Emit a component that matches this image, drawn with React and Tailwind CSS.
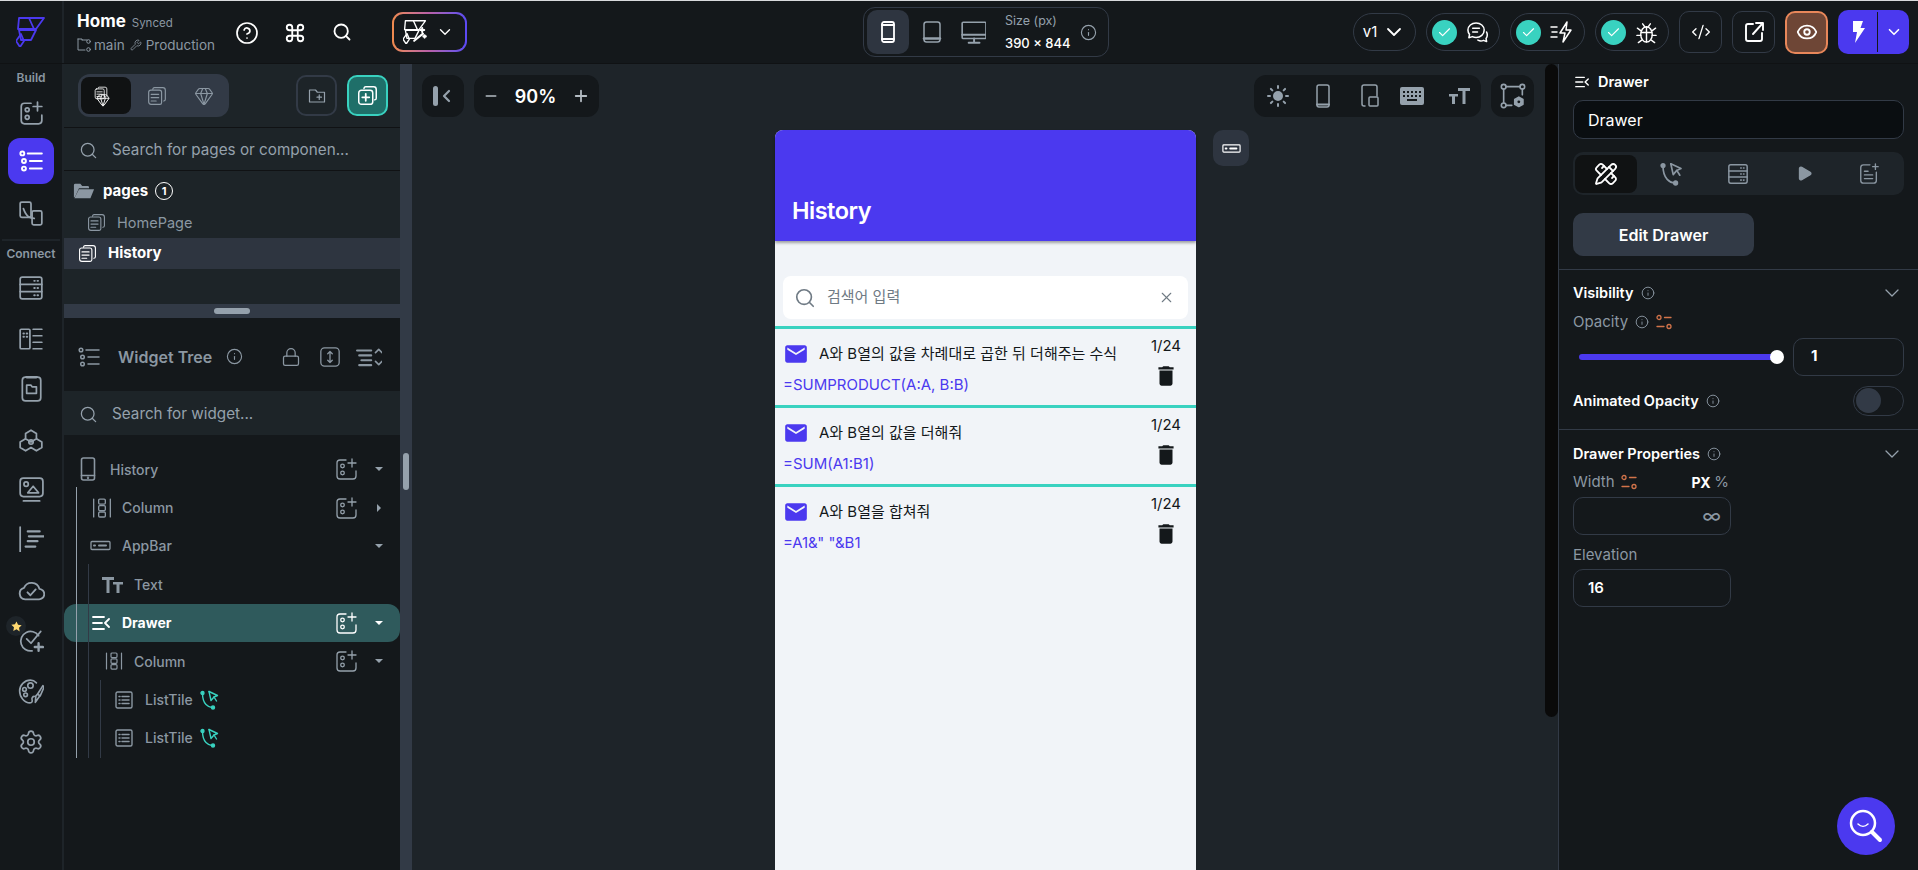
import {
  ChevronDown, CircleHelp, Command, Search, Info, Wrench, Gem, Minus, Plus, Sun, Check, CodeXml, Eye, X, Settings, Lock, Play, PencilRuler,
} from 'lucide-react';
import { MdEmail, MdDelete } from 'react-icons/md';

const Ic = ({ size = 24, vb = 24, className = '', sw = 1.6, children }) => (
  <svg width={size} height={size} viewBox={`0 0 ${vb} ${vb}`} fill="none" stroke="currentColor" strokeWidth={sw} strokeLinecap="round" strokeLinejoin="round" className={`shrink-0 ${className}`}>
    {children}
  </svg>
);

const FFLogo = ({ size = 30, className = '', sw = 1.8, wand }) => (
  <Ic size={size} vb={30} sw={sw} className={className}>
    <path d="M3 1h25l-8 11H2z" />
    <path d="M13 1l5 11" />
    <path d="M3 13h17l-5 10H5z" />
    <path d="M5 17l3 7-4 6-4-6z" />
    {wand && <path d="M14 26l11-9M24 10v5M21.500 12.500h5M27 19v3M25.500 20.500h3" strokeWidth="2.600" />}
  </Ic>
);

const AddWidget = ({ size = 24, className = '', sw = 1.6 }) => (
  <Ic size={size} className={className} sw={sw}>
    <path d="M12 3H6a3 3 0 0 0-3 3v13a3 3 0 0 0 3 3h13a3 3 0 0 0 3-3v-5" />
    <circle cx="8.500" cy="9" r="1.800" />
    <circle cx="8.500" cy="16" r="1.800" />
    <path d="M18 2v8M14 6h8" />
  </Ic>
);

const TreeListIcon = ({ size = 24, className = '', sw = 1.8 }) => (
  <Ic size={size} className={className} sw={sw}>
    <circle cx="4" cy="5" r="1.800" />
    <circle cx="5.500" cy="12" r="1.800" />
    <circle cx="5.500" cy="19" r="1.800" />
    <path d="M9 5h13M11 12h11M11 19h11" />
  </Ic>
);

const ConvertIcon = ({ size = 24, className = '' }) => (
  <Ic size={size} className={className}>
    <rect x="2" y="2" width="10" height="14" rx="1.500" />
    <path d="M5 8c3 8 6 9 10 9" />
    <rect x="13" y="10" width="9" height="13" rx="1.500" />
  </Ic>
);

const ServerIcon = ({ size = 24, className = '' }) => (
  <Ic size={size} className={className}>
    <rect x="2" y="2" width="20" height="20" rx="2" />
    <path d="M2 8.700h20M2 15.300h20" />
    <path d="M15 5.400h.5M18 5.400h.5M15 12h.5M18 12h.5M15 18.600h.5M18 18.600h.5" strokeWidth="1.800" />
  </Ic>
);

const ListSchema = ({ size = 24, className = '' }) => (
  <Ic size={size} className={className}>
    <rect x="2" y="3" width="9" height="18" rx="1" />
    <path d="M5 7h.5M8 7h.5M5 10h.5M8 10h.5" strokeWidth="1.800" />
    <path d="M14 3h8M14 9h8M14 15h8M14 21h8" />
  </Ic>
);

const PhoneFolder = ({ size = 24, className = '' }) => (
  <Ic size={size} className={className}>
    <rect x="4" y="1" width="17" height="22" rx="3" />
    <path d="M8 1h9" strokeWidth="2.400" />
    <path d="M8 8.500h4l1 1.500h4v6H8z" />
  </Ic>
);

const TriCircles = ({ size = 24, className = '' }) => (
  <Ic size={size} className={className}>
    <path d="M12 2l5 3v5l-5 3-5-3V5z" />
    <path d="M7 10l-5 3v5l5 3 5-3 5 3 5-3v-5l-5-3" />
    <circle cx="12" cy="13" r="2" />
  </Ic>
);

const MediaIcon = ({ size = 24, className = '' }) => (
  <Ic size={size} className={className}>
    <rect x="2" y="2" width="21" height="17" rx="3" />
    <circle cx="7.500" cy="7.500" r="2" />
    <path d="M9 15.500l5-6 5 6z" />
    <path d="M5 23h15" />
  </Ic>
);

const AlignIcon = ({ size = 24, className = '' }) => (
  <Ic size={size} className={className}>
    <path d="M2 1v23" />
    <path d="M9 5h11M10 9.500h14M9 14h9M7 19h9" strokeWidth="2" />
  </Ic>
);

const CloudCheck = ({ size = 26, className = '' }) => (
  <Ic size={size} className={className}>
    <path d="M7 20a5 5 0 0 1-1-9.800 7 7 0 0 1 13.200.8A4.500 4.500 0 0 1 18.500 20z" />
    <path d="M9 14l2.500 2.500L16 11.500" />
  </Ic>
);

const CheckPlus = ({ size = 26, className = '' }) => (
  <Ic size={size} className={className}>
    <path d="M19 8a9 9 0 1 0-6 14" />
    <path d="M8 11l4 4 9-11" />
    <path d="M19 15v7M15.500 18.500H23" strokeWidth="2.200" />
  </Ic>
);

const PaletteBrush = ({ size = 26, className = '' }) => (
  <Ic size={size} className={className} sw={1.500}>
    <path d="M17 4.500C15.500 3 13.500 2 11.500 2 6 2 1.500 6.500 1.500 12S6 23 11 23c2 0 2.500-1.500 2-3-.5-1.500.5-3 2-3" />
    <circle cx="11.500" cy="7" r="2.500" />
    <circle cx="6" cy="10.500" r="1.700" />
    <circle cx="7" cy="15.500" r="1.700" />
    <path d="M23 7l-5 8 2.500 1.500L24 8.500z" />
    <path d="M18 15l-1.500 1.500-.5 6 4.500-6.500" />
  </Ic>
);

const StackPages = ({ size = 20, className = '', sw = 1.400 }) => (
  <Ic size={size} className={className} sw={sw}>
    <path d="M7 4V3.500A2 2 0 0 1 9 2h10a3 3 0 0 1 3 3v11a2 2 0 0 1-2 2" />
    <path d="M4.500 5H15a2.500 2.500 0 0 1 2.500 2.500V20a2 2 0 0 1-2 2H5a3 3 0 0 1-3-3V7.500A2.500 2.500 0 0 1 4.500 5z" />
    <path d="M5 10h9M5 14h9M5 18h6" />
  </Ic>
);

const AddPage = ({ size = 22, className = '' }) => (
  <Ic size={size} className={className} sw={1.700}>
    <path d="M8 4V3.500A2 2 0 0 1 10 2h9a3 3 0 0 1 3 3v10a2 2 0 0 1-2 2" />
    <rect x="2" y="6" width="16" height="16" rx="3" />
    <path d="M10 10v8M6 14h8" strokeWidth="2" />
  </Ic>
);

const FolderAdd = ({ size = 20, className = '' }) => (
  <Ic size={size} className={className}>
    <path d="M2 4h8l2.500 3H22v13H2z" />
    <path d="M15 10.500v6M12 13.500h6" />
  </Ic>
);

const OpenFolder = ({ size = 24, className = '' }) => (
  <svg width={size} height={size} viewBox="0 0 24 24" fill="currentColor" className={`shrink-0 ${className}`}>
    <path d="M1 5.500A1.500 1.500 0 0 1 2.500 4H8l2 2.500h6A1.500 1.500 0 0 1 17.500 8v1H6.500L2.500 18 1 19z" />
    <path d="M6.500 10H23l-4 10H1.500z" />
  </svg>
);

const BranchIcon = ({ size = 14, className = '' }) => (
  <Ic size={size} vb={14} sw={1} className={className}>
    <path d="M1 1h4v1h5M1 1v11h7M5 2v0" />
    <circle cx="11.500" cy="3.500" r="1.800" />
    <circle cx="11.500" cy="11.500" r="1.800" />
  </Ic>
);

const VarIcon = ({ className = '' }) => (
  <Ic size={16} vb={16} sw={1.300} className={`text-[#d2734a] ${className}`}>
    <circle cx="3" cy="3.500" r="2" />
    <path d="M8.500 3.500H15" />
    <path d="M1 12.500h7" />
    <circle cx="13" cy="12.500" r="2" />
  </Ic>
);

const DrawerIcon = ({ size = 18, className = '' }) => (
  <Ic size={size} vb={18} sw={1.800} className={className}>
    <path d="M1 3h11M1 9h9M1 15h11M17 5l-4 4 4 4" />
  </Ic>
);

const ColumnIcon = ({ size = 18, className = '' }) => (
  <Ic size={size} vb={18} sw={1.200} className={className}>
    <path d="M1.500 1v16M16.500 1v16" />
    <rect x="6" y="1" width="6" height="4.500" rx="1" />
    <rect x="6" y="6.800" width="6" height="4.500" rx="1" />
    <rect x="6" y="12.600" width="6" height="4.500" rx="1" />
  </Ic>
);

const AppBarIcon = ({ size = 21, className = '' }) => (
  <Ic size={size} vb={21} sw={1.300} className={className}>
    <rect x="1" y="6.500" width="19" height="8" rx="1" />
    <path d="M4 10.500h1M9 10.500h7" strokeWidth="2" />
  </Ic>
);

const ListTileIcon = ({ size = 18, className = '' }) => (
  <Ic size={size} vb={18} sw={1.400} className={className}>
    <rect x="1" y="1" width="16" height="16" rx="1.500" />
    <path d="M4 5.500h1M7 5.500h7M4 9h1M7 9h7M4 12.500h1M7 12.500h7" strokeWidth="1.500" />
  </Ic>
);

const ActionFlow = ({ size = 20, className = '' }) => (
  <Ic size={size} vb={20} sw={1.400} className={className}>
    <circle cx="2.500" cy="3" r="1.500" fill="currentColor" />
    <path d="M2.500 3c0 5 1 9 3.500 11.500 2 2 4.500 3 6 3" />
    <circle cx="13" cy="17.500" r="1.500" fill="currentColor" />
    <path d="M9 1.500l8.500 4-3.500 1.500 2.500 4" />
    <path d="M9 1.500l2 9 3-3.500" />
  </Ic>
);

// big T left, small T right
const TextSize = ({ size = 21, className = '' }) => (
  <svg width={size} height={size} viewBox="0 0 21 21" fill="currentColor" className={`shrink-0 ${className}`}>
    <path d="M0 3h12v3H7.500v13h-3V6H0z" />
    <path d="M11 8h10v2.500h-3.500V19h-3v-8.500H11z" />
  </svg>
);

// small T left, big T right
const TextSizeUp = ({ size = 21, className = '' }) => (
  <svg width={size} height={size} viewBox="0 0 21 21" fill="currentColor" className={`shrink-0 ${className}`}>
    <path d="M9 2h12v3h-4.500v13h-3V5H9z" />
    <path d="M0 8h9v2.500H6V18H3v-7.500H0z" />
  </svg>
);

const Chats = ({ size = 24, className = '' }) => (
  <Ic size={size} sw={1.600} className={className}>
    <path d="M10.500 2C5.800 2 2 5.400 2 9.500c0 1.700.6 3.200 1.700 4.500L3 17.500l3.700-1.200c1.200.6 2.500.9 3.800.9 4.700 0 8.500-3.400 8.500-7.700S15.200 2 10.500 2z" />
    <path d="M7 7.500h7M7 11.500h5" />
    <path d="M21.500 11.500c.5.900.7 1.900.7 3 0 1.400-.5 2.700-1.300 3.700l.6 3.300-3.300-1.300c-1.700.8-4 .7-5.800-.2" />
  </Ic>
);

const Beetle = ({ size = 24, className = '' }) => (
  <Ic size={size} sw={1.500} className={className}>
    <ellipse cx="12" cy="14" rx="6" ry="8" />
    <path d="M12 6v16M6.500 12h11" />
    <path d="M8 3l2.500 3.500M16 3l-2.500 3.500" />
    <path d="M6 10L2.500 7.500M6 15H2M7 20l-3.500 2.500M18 10l3.500-2.500M18 15h4M17 20l3.500 2.500" />
  </Ic>
);

const Bolt = ({ size = 22, className = '' }) => (
  <svg width={size} height={size} viewBox="0 0 22 22" fill="currentColor" className={`shrink-0 ${className}`}>
    <path d="M6 0h10l-2.500 7H18L8 22l2-11H6z" />
  </svg>
);

const Info14 = ({ size = 14, className = 'text-[#8b97a2]' }) => <Info size={size} strokeWidth={1.600} className={`shrink-0 ${className}`} />;

const Caret = ({ right, className = 'text-[#95a1ac]' }) => (
  <svg width="8" height="8" viewBox="0 0 8 8" fill="currentColor" className={`shrink-0 ${className}`}>
    {right ? <path d="M2 0l4 4-4 4z" /> : <path d="M0 2h8L4 6z" />}
  </svg>
);

const railIcon = 'text-[#95a1ac]';

const Rail = () => (
  <aside className="flex w-[64px] shrink-0 flex-col items-center border-r-2 border-[#1e2429] pt-[6px]">
    <span className="text-[12px] leading-[16px] font-semibold text-[#8b97a2]">Build</span>
    <AddWidget size={26} className={`${railIcon} mt-[14px]`} />
    <div className="mt-[12px] flex h-[46px] w-[46px] items-center justify-center rounded-xl bg-[#4b39ef] text-white">
      <TreeListIcon size={26} />
    </div>
    <ConvertIcon size={26} className={`${railIcon} mt-[16px]`} />
    <div className="mt-[13px] h-[2px] w-[58px] bg-[#1e2429]" />
    <span className="mt-[5px] text-[12px] leading-[16px] font-semibold text-[#8b97a2]">Connect</span>
    <ServerIcon size={26} className={`${railIcon} mt-[13px]`} />
    <ListSchema size={26} className={`${railIcon} mt-[25px]`} />
    <PhoneFolder size={26} className={`${railIcon} mt-[24px]`} />
    <TriCircles size={26} className={`${railIcon} mt-[26px]`} />
    <MediaIcon size={26} className={`${railIcon} mt-[22px]`} />
    <AlignIcon size={26} className={`${railIcon} mt-[24px]`} />
    <CloudCheck size={28} className={`${railIcon} mt-[24px]`} />
    <div className="relative mt-[23px]">
      <CheckPlus size={26} className={railIcon} />
      <div className="absolute -top-[11px] -left-[12px] flex h-[20px] w-[20px] items-center justify-center rounded-full bg-[#1e2429]">
        <svg width="11" height="11" viewBox="0 0 24 24" fill="#ffd970"><path d="M12 1l3.400 7.300 7.900 1-5.800 5.500 1.500 7.900L12 18l-7 3.700 1.500-7.900L.7 8.300l7.900-1z" /></svg>
      </div>
    </div>
    <PaletteBrush size={26} className={`${railIcon} mt-[25px]`} />
    <Settings size={26} strokeWidth={1.600} className={`${railIcon} mt-[25px]`} />
  </aside>
);

const TreeRow = ({ pad, icon: Icon, iconSize, iconBox, label, add, caret, active, flow }) => (
  <div className={`flex h-[38.4px] items-center rounded-xl pr-[17px] ${pad} ${active ? 'bg-[#2f5a5c] text-white' : 'text-[#8b97a2]'}`}>
    <span className={`flex ${iconBox}`}><Icon size={iconSize} /></span>
    <span className={`text-[14px] ${active ? 'font-bold' : 'font-medium'}`}>{label}</span>
    {flow && <ActionFlow size={20} className="ml-[7px] text-[#39d2c0]" />}
    <div className="ml-auto flex items-center">
      {add && <AddWidget size={24} sw={1.300} className={active ? 'text-white' : 'text-[#95a1ac]'} />}
      {caret && <span className="ml-[17px] flex w-[8px]"><Caret right={caret === 'right'} className={active ? 'text-white' : 'text-[#95a1ac]'} /></span>}
    </div>
  </div>
);

const PhoneOutline = ({ size }) => (
  <Ic size={size} sw={1.600}>
    <rect x="5.500" y="1" width="13" height="22" rx="2" />
    <path d="M5.500 18.500h13" />
    <circle cx="12" cy="20.700" r=".4" fill="currentColor" />
  </Ic>
);

const LeftPanel = () => (
  <section className="flex w-[336px] shrink-0 flex-col">
    <div className="flex h-[64px] items-center justify-between border-b border-[#101214] bg-[#1d2428] pr-[12px] pl-[14px]">
      <div className="flex h-[43px] w-[151px] items-center rounded-xl bg-[#323a46] p-[3px]">
        <div className="flex h-[37px] w-[50px] items-center justify-center rounded-lg bg-[#101213] text-white">
          <Gem size={14} strokeWidth={1.600} className="translate-x-[4px] translate-y-[4px]" />
          <StackPages size={14} className="-translate-x-[12px] -translate-y-[3px]" />
        </div>
        <div className="flex flex-1 justify-center text-[#8b97a2]"><StackPages size={20} /></div>
        <div className="flex w-[44px] justify-center text-[#8b97a2]"><Gem size={20} strokeWidth={1.400} /></div>
      </div>
      <div className="flex items-center gap-[10px]">
        <div className="flex h-[41px] w-[41px] items-center justify-center rounded-[10px] border-2 border-[#323a46] text-[#95a1ac]"><FolderAdd size={18} /></div>
        <div className="flex h-[41px] w-[41px] items-center justify-center rounded-[10px] border-2 border-[#39d2c0] bg-[#1f6f69] text-white"><AddPage size={21} /></div>
      </div>
    </div>
    <div className="flex h-[43px] items-center gap-[14px] border-b border-[#101214] bg-[#1d2428] pt-[2px] pl-[15px]">
      <Search size={19} strokeWidth={1.600} className="text-[#95a1ac]" />
      <span className="text-[15.250px] text-[#95a1ac]">Search for pages or componen...</span>
    </div>
    <div className="flex h-[133px] flex-col bg-[#1d2428]">
      <div className="mt-[4px] flex h-[32px] items-center pl-[9px]">
        <OpenFolder size={22} className="text-[#8b97a2]" />
        <span className="ml-[8px] text-[15px] font-bold text-white">pages</span>
        <span className="ml-[7px] flex h-[18px] w-[18px] items-center justify-center rounded-full border border-white text-[11px] font-bold text-white">1</span>
      </div>
      <div className="flex h-[31px] items-center pl-[23px]">
        <StackPages size={19} className="text-[#8b97a2]" />
        <span className="ml-[11px] text-[14.500px] text-[#8b97a2]">HomePage</span>
      </div>
      <div className="flex h-[31px] items-center bg-[#2e3540] pl-[14px]">
        <StackPages size={19} className="text-white" />
        <span className="ml-[11px] text-[15px] font-bold text-white">History</span>
      </div>
    </div>
    <div className="flex h-[14px] shrink-0 items-center justify-center bg-[#323a46]">
      <div className="h-[6px] w-[36px] rounded-full bg-[#95a1ac]" />
    </div>
    <div className="flex h-[73px] items-center pt-[4px] pr-[18px] pl-[13px] text-[#8b97a2]">
      <TreeListIcon size={24} sw={1.500} />
      <span className="ml-[17px] text-[16px] font-semibold">Widget Tree</span>
      <Info size={17} strokeWidth={1.600} className="ml-[14px]" />
      <Lock size={20} strokeWidth={1.500} className="ml-auto" />
      <Ic size={22} sw={1.400} className="ml-[18px]">
        <rect x="2" y="2" width="20" height="20" rx="4" />
        <path d="M12 6v12M9.500 8.500L12 6l2.500 2.500M9.500 15.500L12 18l2.500-2.500" />
      </Ic>
      <Ic size={26} sw={1.500} className="ml-[15px]">
        <path d="M1 6h13M3 10.500h11M5 15h9M3 19.500h11" strokeWidth="2" />
        <path d="M18 8l3-3 3 3M18 16l3 3 3-3" />
      </Ic>
    </div>
    <div className="flex h-[44px] items-center gap-[14px] bg-[#1d2428] pt-[2px] pl-[15px]">
      <Search size={19} strokeWidth={1.600} className="text-[#95a1ac]" />
      <span className="text-[15.250px] text-[#95a1ac]">Search for widget...</span>
    </div>
    <div className="relative mt-[15px]">
      <TreeRow pad="pl-[12px]" icon={PhoneOutline} iconSize={24} iconBox="w-[34px]" label="History" add caret="down" />
      <TreeRow pad="pl-[28px]" icon={ColumnIcon} iconSize={20} iconBox="w-[30px]" label="Column" add caret="right" />
      <TreeRow pad="pl-[26px]" icon={AppBarIcon} iconSize={21} iconBox="w-[32px]" label="AppBar" caret="down" />
      <TreeRow pad="pl-[38px]" icon={TextSize} iconSize={21} iconBox="w-[32px]" label="Text" />
      <TreeRow pad="pl-[28px]" icon={DrawerIcon} iconSize={18} iconBox="w-[30px]" label="Drawer" add caret="down" active />
      <TreeRow pad="pl-[41px]" icon={ColumnIcon} iconSize={18} iconBox="w-[29px]" label="Column" add caret="down" />
      <TreeRow pad="pl-[51px]" icon={ListTileIcon} iconSize={18} iconBox="w-[30px]" label="ListTile" flow />
      <TreeRow pad="pl-[51px]" icon={ListTileIcon} iconSize={18} iconBox="w-[30px]" label="ListTile" flow />
      {/* guide lines */}
      <div className="absolute top-[37px] left-[12px] h-[271px] w-px bg-[#95a1ac]" />
      <div className="absolute top-[114px] left-[24px] h-[194px] w-px bg-[#323a46]" />
      <div className="absolute top-[230px] left-[36px] h-[78px] w-px bg-[#323a46]" />
    </div>
  </section>
);

const ToolBtn = ({ className = '', children }) => (
  <div className={`flex h-[42px] items-center rounded-xl bg-[#14181b] text-[#95a1ac] ${className}`}>{children}</div>
);

const HistoryRow = ({ title, formula }) => (
  <div className="flex h-[79px] border-t-[3px] border-[#39d2c0]">
    <div className="min-w-0 flex-1 pl-[8px]">
      <div className="mt-[11px] flex h-[28px] items-center">
        <MdEmail size={26} className="shrink-0 text-[#4b39ef]" />
        <span className="ml-[10px] text-[15px] text-[#14181b]">{title}</span>
      </div>
      <div className="mt-[7px] text-[15px] leading-[20px] text-[#4b39ef]">{formula}</div>
    </div>
    <div className="flex w-[60px] flex-col items-center pt-[6px]">
      <span className="text-[15px] leading-[22px] text-[#14181b]">1/24</span>
      <MdDelete size={26} className="mt-[6px] text-[#14181b]" />
    </div>
  </div>
);

const Phone = () => (
  <div className="h-[800px] w-[421px] shrink-0 rounded-t-lg bg-[#f1f4f8]">
    <div className="flex h-[111px] items-end rounded-t-lg bg-[#4b39ef] px-[17px] pb-[14px] shadow-[0_2px_3px_rgba(0,0,0,0.35)]">
      <span className="text-[23.500px] leading-[32px] font-semibold tracking-[-0.5px] text-white">History</span>
    </div>
    <div className="mx-[8px] mt-[35px] flex h-[43px] items-center rounded-lg bg-white pr-[13px] pl-[11px] text-[#6f7a84]">
      <Search size={22} strokeWidth={1.800} />
      <span className="ml-[11px] text-[15px]">검색어 입력</span>
      <X size={17} strokeWidth={1.500} className="ml-auto" />
    </div>
    <div className="mt-[7px]">
      <HistoryRow title="A와 B열의 값을 차례대로 곱한 뒤 더해주는 수식" formula="=SUMPRODUCT(A:A, B:B)" />
      <HistoryRow title="A와 B열의 값을 더해줘" formula="=SUM(A1:B1)" />
      <HistoryRow title="A와 B열을 합쳐줘" formula={'=A1&" "&B1'} />
    </div>
  </div>
);

const Canvas = () => (
  <main className="flex min-w-0 flex-1 flex-col overflow-hidden bg-[#1e2429]">
    <div className="flex shrink-0 items-start justify-between pt-[11px] pr-[11px] pl-[10px]">
      <div className="flex gap-[10px]">
        <ToolBtn className="w-[42px] justify-center">
          <div className="h-[20px] w-[5px] rounded-sm bg-[#95a1ac]" />
          <Ic size={14} vb={14} sw={2.200} className="ml-[2px]"><path d="M9 2L4 7l5 5" /></Ic>
        </ToolBtn>
        <ToolBtn className="w-[125px] justify-between px-[9px]">
          <Minus size={16} strokeWidth={2.500} className="text-[#b4bcc3]" />
          <span className="text-[18px] font-semibold text-white">90%</span>
          <Plus size={18} strokeWidth={2.400} className="text-[#b4bcc3]" />
        </ToolBtn>
      </div>
      <div className="flex gap-[10px]">
        <ToolBtn className="w-[227px] pl-[12px]">
          <Sun size={24} strokeWidth={2} fill="currentColor" />
          <Ic size={24} sw={1.500} className="ml-[21px]"><rect x="6" y="1" width="12" height="22" rx="2" /><path d="M6 20.500h12" strokeWidth="2" /></Ic>
          <Ic size={24} sw={1.500} className="ml-[23px]"><path d="M7 22H6a2 2 0 0 1-2-2V3a2 2 0 0 1 2-2h11a2 2 0 0 1 2 2v9" /><rect x="11" y="13" width="9" height="9" rx="1" /></Ic>
          <svg width="24" height="20" viewBox="0 0 24 20" fill="currentColor" className="ml-[18px]"><path fillRule="evenodd" d="M2 1h20a2 2 0 0 1 2 2v14a2 2 0 0 1-2 2H2a2 2 0 0 1-2-2V3a2 2 0 0 1 2-2zM3 5v2h2V5zm4 0v2h2V5zm4 0v2h2V5zm4 0v2h2V5zm4 0v2h2V5zM3 9v2h2V9zm4 0v2h2V9zm4 0v2h2V9zm4 0v2h2V9zm4 0v2h2V9zM7 13v2h10v-2z" /></svg>
          <TextSizeUp size={21} className="ml-[25px]" />
        </ToolBtn>
        <ToolBtn className="w-[43px] justify-center">
          <Ic size={28} sw={1.400}>
            <circle cx="4" cy="4" r="2" /><circle cx="20" cy="4" r="2" /><circle cx="4" cy="20" r="2" />
            <path d="M6 4h12M4 6v12M20 6v5M6 20h5" />
            <path d="M17 13l3.500 2v4L17 21l-3.500-2v-4z" fill="currentColor" />
            <circle cx="17" cy="17" r="1.200" fill="#14181b" stroke="none" />
          </Ic>
        </ToolBtn>
      </div>
    </div>
    <div className="mt-[13px] flex items-start gap-[17px] pl-[363px]">
      <Phone />
      <div className="flex h-[36px] w-[36px] items-center justify-center rounded-[10px] bg-[#2e3540] text-white"><AppBarIcon size={19} /></div>
    </div>
  </main>
);

const PanelInput = ({ className = '', children }) => (
  <div className={`flex h-[38px] items-center rounded-[10px] border border-[#323a46] ${className}`}>{children}</div>
);

const SectionHead = ({ label, className = '' }) => (
  <div className={`flex items-center ${className}`}>
    <span className="text-[14.500px] font-semibold text-white">{label}</span>
    <Info14 size={14} className="ml-[7px] text-[#8b97a2]" />
    <ChevronDown size={24} strokeWidth={1.300} className="ml-auto text-[#95a1ac]" />
  </div>
);

const RightPanel = () => (
  <aside className="flex w-[360px] shrink-0 flex-col border-l border-[#323a46]">
    <div className="px-[14px]">
      <div className="flex h-[36px] items-center pl-[2px] text-white">
        <DrawerIcon size={14} />
        <span className="ml-[9px] text-[14.500px] font-semibold">Drawer</span>
      </div>
      <div className="flex h-[39px] items-center rounded-[10px] border border-[#323a46] bg-[#0a0e11] pl-[14px] text-[16px] text-white">Drawer</div>
      <div className="mt-[13px] flex h-[43px] items-center rounded-[10px] bg-[#1e2429] p-[2px] text-[#8b97a2]">
        <div className="flex h-[38px] w-[62px] items-center justify-center rounded-lg bg-[#101213] text-white">
          <PencilRuler size={24} strokeWidth={1.800} />
        </div>
        <ActionFlow size={24} className="ml-[23px]" />
        <ServerIcon size={22} className="ml-[43px]" />
        <Play size={17} fill="currentColor" className="ml-[47px]" />
        <Ic size={22} sw={1.500} className="ml-[45px]"><path d="M13 2H6a3 3 0 0 0-3 3v14a3 3 0 0 0 3 3h11a3 3 0 0 0 3-3v-9" /><path d="M7 9h4M7 13h9M7 17h9" /><path d="M19 1v6M16 4h6" /></Ic>
      </div>
      <div className="mt-[18px] flex h-[43px] w-[181px] items-center justify-center rounded-[10px] bg-[#323a46] text-[16px] font-semibold text-white">Edit Drawer</div>
    </div>
    <div className="mt-[13px] h-px bg-[#323a46]" />
    <div className="h-[159px] px-[14px]">
      <SectionHead label="Visibility" className="mt-[11px]" />
      <div className="mt-[6px] flex items-center text-[15px] text-[#8b97a2]">
        <span>Opacity</span>
        <Info14 size={14} className="ml-[7px]" />
        <VarIcon className="ml-[7px]" />
      </div>
      <div className="mt-[4px] flex items-center">
        <div className="relative ml-[6px] h-[6px] w-[198px] rounded-full bg-[#4b39ef]">
          <div className="absolute -top-[4px] -right-[7px] h-[14px] w-[14px] rounded-full bg-white" />
        </div>
        <PanelInput className="ml-auto w-[111px] pl-[17px] text-[15px] font-bold text-white">1</PanelInput>
      </div>
      <div className="mt-[10px] flex items-center">
        <span className="text-[14.500px] font-semibold text-white">Animated Opacity</span>
        <Info14 size={14} className="ml-[7px] text-[#8b97a2]" />
        <div className="ml-auto flex h-[30px] w-[51px] items-center rounded-full border border-[#323a46] pl-[2px]">
          <div className="h-[25px] w-[25px] rounded-full bg-[#323a46]" />
        </div>
      </div>
    </div>
    <div className="h-px bg-[#323a46]" />
    <div className="px-[14px]">
      <SectionHead label="Drawer Properties" className="mt-[12px]" />
      <div className="mt-[5px] flex w-[158px] items-center text-[15px] text-[#8b97a2]">
        <span>Width</span>
        <VarIcon className="ml-[6px]" />
        <span className="ml-auto text-[14px] font-bold tracking-[-0.3px] text-white">PX</span>
        <span className="mr-[2px] ml-[4px] text-[15px]">%</span>
      </div>
      <PanelInput className="mt-[3px] w-[158px] justify-end pr-[9px] text-[20px] text-[#8b97a2]">∞</PanelInput>
      <div className="mt-[9px] text-[15px] text-[#8b97a2]">Elevation</div>
      <PanelInput className="mt-[3px] w-[158px] pl-[14px] text-[15px] font-semibold text-white">16</PanelInput>
    </div>
  </aside>
);

const CheckPill = ({ children, className = '' }) => (
  <div className={`flex h-[38px] items-center rounded-full border border-[#323a46] pl-[5px] text-white ${className}`}>
    <div className="flex h-[25px] w-[25px] items-center justify-center rounded-full bg-[#39d2c0]">
      <Check size={15} strokeWidth={1.800} />
    </div>
    <span className="ml-[9px] flex">{children}</span>
  </div>
);

const TopBar = () => (
  <header className="flex h-[63px] shrink-0 items-center border-b border-[#101214]">
    <div className="flex h-full w-[64px] shrink-0 items-center justify-center border-r-2 border-[#1e2429]">
      <FFLogo size={30} className="text-[#4b39ef]" />
    </div>
    <div className="ml-[13px] w-[140px] shrink-0">
      <div className="flex items-baseline">
        <span className="text-[17px] font-bold text-white">Home</span>
        <span className="ml-[6px] text-[11.500px] text-[#8b97a2]">Synced</span>
      </div>
      <div className="mt-[1px] flex items-center text-[13.500px] text-[#8b97a2]">
        <BranchIcon size={14} />
        <span className="ml-[3px]">main</span>
        <Wrench size={12} strokeWidth={1.600} className="ml-[5px]" />
        <span className="ml-[4px]">Production</span>
      </div>
    </div>
    <CircleHelp size={24} strokeWidth={1.700} className="mt-[1px] ml-[18px] text-white" />
    <Command size={22} strokeWidth={2} className="mt-[1px] ml-[25px] text-white" />
    <Search size={20} strokeWidth={2.200} className="ml-[26px] text-white" />
    <div className="ml-[40px] rounded-[11px] bg-gradient-to-r from-[#f08a4b] via-[#b85fa8] to-[#5a48f5] p-[2px]">
      <div className="flex h-[36px] w-[71px] items-center rounded-[9px] bg-[#14181b] pl-[9px] text-white">
        <FFLogo size={24} sw={1.700} wand />
        <ChevronDown size={18} strokeWidth={1.800} className="ml-[9px]" />
      </div>
    </div>
    <div className="ml-[396px] flex h-[50px] w-[246px] items-center rounded-[12px] border border-[#323a46] pl-[3px] text-[#95a1ac]">
      <div className="flex h-[44px] w-[42px] items-center justify-center rounded-[10px] bg-[#2e3540] text-white">
        <Ic size={24} sw={1.800}><rect x="6" y="2" width="12" height="20" rx="2" /><path d="M6 5h12M6 19h12" /></Ic>
      </div>
      <Ic size={24} sw={1.500} className="ml-[11px]"><rect x="4" y="2" width="16" height="20" rx="2.500" /><path d="M4 18.500h16" strokeWidth="2.400" /></Ic>
      <Ic size={26} sw={1.500} className="ml-[16px]"><rect x="2" y="3" width="22" height="15" rx="1" /><path d="M2 14.500h22M13 18v4M8 22h10" strokeWidth="1.800" /></Ic>
      <div className="ml-[19px] w-[64px]">
        <div className="text-[12.500px] leading-[16px] text-[#95a1ac]">Size (px)</div>
        <div className="mt-[6px] text-[13px] leading-[16px] font-medium whitespace-nowrap text-white">390 × 844</div>
      </div>
      <Info size={17} strokeWidth={1.600} className="ml-[11px]" />
    </div>
    <div className="ml-auto flex items-center pr-[9px] text-white">
      <div className="flex h-[38px] w-[63px] items-center justify-center gap-[5px] rounded-full border border-[#323a46] text-[15px]">
        v1 <ChevronDown size={24} strokeWidth={1.800} />
      </div>
      <CheckPill className="ml-[10px] w-[74px]"><Chats size={23} /></CheckPill>
      <CheckPill className="ml-[10px] w-[75px]">
        <Ic size={24} sw={1.500}><path d="M1 7h6M2 12h5M1 17h6" /><path d="M17 2l-7 11h5l-2 9 8-12h-5z" /></Ic>
      </CheckPill>
      <CheckPill className="ml-[10px] w-[74px]"><Beetle size={23} /></CheckPill>
      <div className="ml-[10px] flex h-[42px] w-[43px] items-center justify-center rounded-[10px] border border-[#323a46]"><CodeXml size={20} strokeWidth={1.600} /></div>
      <div className="ml-[10px] flex h-[42px] w-[43px] items-center justify-center rounded-[10px] border border-[#323a46]">
        <Ic size={24} sw={1.900}><path d="M11 4H6a2 2 0 0 0-2 2v13a2 2 0 0 0 2 2h12a2 2 0 0 0 2-2v-6" /><path d="M11 14L20 4M14 3h7v7" /></Ic>
      </div>
      <div className="ml-[10px] flex h-[43px] w-[43px] items-center justify-center rounded-[10px] border-2 border-[#e8875a] bg-[#6e4636]"><Eye size={22} strokeWidth={2} /></div>
      <div className="ml-[10px] flex h-[44px] w-[71px] items-center rounded-[10px] bg-[#4b39ef]">
        <div className="flex h-[40px] w-[40px] items-center justify-center border-r border-[#14181b]"><Bolt size={22} /></div>
        <ChevronDown size={18} strokeWidth={2.200} className="ml-[7px]" />
      </div>
    </div>
  </header>
);

export default function App() {
  return (
    <div className="relative flex h-screen w-full flex-col overflow-hidden bg-[#14181b] font-['Inter','Noto_Sans_CJK_KR',sans-serif]">
      <div className="h-px shrink-0 bg-[#d8dadc]" />
      <TopBar />
      <div className="flex min-h-0 flex-1">
        <Rail />
        <LeftPanel />
        <div className="w-[12px] shrink-0 bg-[#323a46] pt-[389px]">
          <div className="mx-auto h-[37px] w-[6px] rounded-full bg-[#95a1ac]" />
        </div>
        <Canvas />
        <div className="flex w-[13px] shrink-0 flex-col bg-[#1e2429]">
          <div className="h-[653px] rounded-full bg-[#0a0a0a]" />
        </div>
        <RightPanel />
      </div>
      <div className="absolute top-[797px] right-[23px] flex h-[58px] w-[58px] items-center justify-center rounded-full bg-[#4b39ef] text-white">
        <Ic size={38} vb={38} sw={2.500}>
          <circle cx="16" cy="16" r="12" />
          <path d="M25 25l8 8" strokeWidth="4" />
          <path d="M11 17c3 3 7 3 10 0" strokeWidth="1.500" />
        </Ic>
      </div>
    </div>
  );
}
